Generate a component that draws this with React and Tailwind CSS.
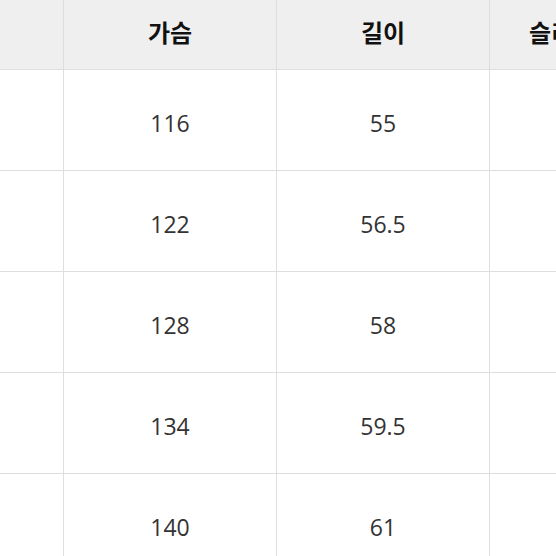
const HEADERS = ['', '가슴', '길이', '슬리브 길이'];

const ROWS = [
  ['', '116', '55', ''],
  ['', '122', '56.5', ''],
  ['', '128', '58', ''],
  ['', '134', '59.5', ''],
  ['', '140', '61', ''],
];

const COLS = 'grid grid-cols-[64px_213px_213px_195px]';

export default function App() {
  return (
    <div className="w-[556px] h-[556px] overflow-hidden bg-white">
      <div className="w-[685px]">
        {/* header */}
        <div className={`${COLS} h-[70px] bg-[#efefef] border-b border-[#dedede]`}>
          {HEADERS.map((h, i) => (
            <div
              key={i}
              className="flex items-center justify-center pb-[6px] border-r border-[#dedede] text-[24px] font-bold text-[#111] font-['Noto_Sans_CJK_KR',sans-serif] whitespace-nowrap"
            >
              {h}
            </div>
          ))}
        </div>

        {/* body */}
        {ROWS.map((row, r) => (
          <div key={r} className={`${COLS} h-[101px] border-b border-[#dedede]`}>
            {row.map((v, i) => (
              <div
                key={i}
                className="flex items-center justify-center pt-[6px] border-r border-[#dedede] text-[23px] text-[#333] font-['Open_Sans',sans-serif]"
              >
                {v}
              </div>
            ))}
          </div>
        ))}
      </div>
    </div>
  );
}
